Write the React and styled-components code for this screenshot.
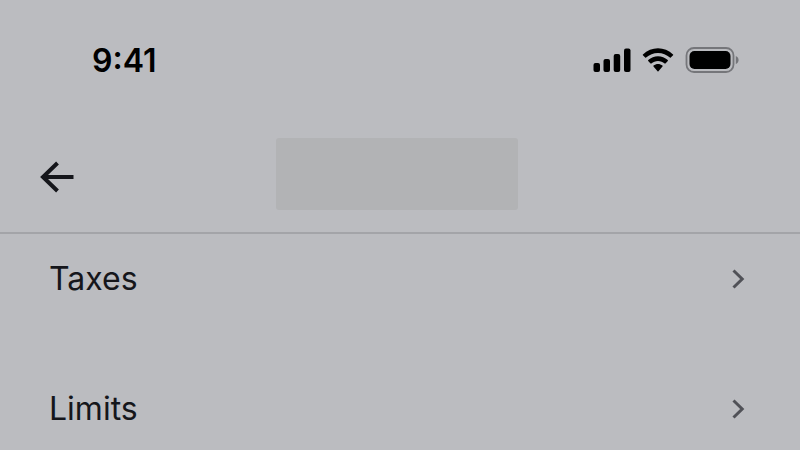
import styled, { createGlobalStyle } from "styled-components";

const items = ["Taxes", "Limits"];

export default function App() {
	return (
		<>
			<GlobalStyle />
			<StatusBar>
				<Clock>9:41</Clock>
				<Indicators>
					<Signal />
					<Wifi />
					<Battery />
				</Indicators>
			</StatusBar>
			<NavBar>
				<BackButton type="button" aria-label="Back">
					<svg width="34" height="32" viewBox="0 0 34 32">
						<path d="M33.500 16H3M17.500 2L3 16l14.500 14" />
					</svg>
				</BackButton>
				<TitlePlaceholder />
			</NavBar>
			<List>
				{items.map((item) => (
					<li key={item}>
						<Row href="#">
							{item}
							<Chevron />
						</Row>
					</li>
				))}
			</List>
		</>
	);
}

function Signal() {
	return (
		<svg width="38" height="24" viewBox="0 0 38 24">
			<rect x="0.500" y="15" width="6.500" height="9" rx="2" />
			<rect x="10.500" y="11" width="6.500" height="13" rx="2" />
			<rect x="20.700" y="6" width="6.500" height="18" rx="2" />
			<rect x="31" y="0.500" width="6.500" height="23.500" rx="2" />
		</svg>
	);
}

function Wifi() {
	return (
		<svg width="32" height="24" viewBox="0 0 32 24">
			<path d="M16 4.9c4.5 0 8.700 1.700 11.900 4.700.25.23.64.23.88 0l2.300-2.300c.26-.26.26-.67 0-.92C22.700-1.700 9.300-1.700.9 6.380c-.26.25-.26.66 0 .92l2.300 2.300c.24.23.63.23.88 0C7.300 6.600 11.500 4.900 16 4.900z" />
			<path d="M16 12.900c2.500 0 4.800.9 6.600 2.500.25.24.64.24.88 0l2.300-2.350c.26-.26.25-.68-.01-.93-5.500-5.160-14.040-5.160-19.540 0-.26.25-.27.67-.01.93l2.300 2.350c.24.24.63.24.88 0 1.800-1.600 4.100-2.500 6.600-2.500z" />
			<path d="M20.500 18.500c.26-.27.25-.7-.03-.94-2.600-2.200-6.340-2.200-8.940 0-.28.24-.29.67-.03.94l4.050 4.800c.25.29.65.29.9 0z" />
		</svg>
	);
}

function Battery() {
	return (
		<svg width="54" height="26" viewBox="0 0 54 26">
			<rect
				x="1.500"
				y="1"
				width="47"
				height="24"
				rx="7.500"
				fill="none"
				stroke="#75767a"
				strokeWidth="1.800"
			/>
			<rect x="4.500" y="4" width="41" height="18" rx="5" />
			<path d="M50.800 8.900v8.200c1.700-.7 2.800-2.200 2.800-4.100s-1.100-3.400-2.800-4.100z" fill="#75767a" />
		</svg>
	);
}

function Chevron() {
	return (
		<ChevronIcon width="14" height="20" viewBox="0 0 14 20">
			<path d="M1.500 1.500L10.200 10l-8.700 8.500" />
		</ChevronIcon>
	);
}

const GlobalStyle = createGlobalStyle`
	body {
		margin: 0;
		background: #bbbcc0;
		color: #15161b;
		font-family: "Inter", "Liberation Sans", sans-serif;
	}
`;

const StatusBar = styled.header`
	display: flex;
	align-items: center;
	justify-content: space-between;
	height: 120px;
	padding: 0 61px 0 92px;
	box-sizing: border-box;
	color: #000;
`;

const Clock = styled.time`
	padding-top: 2px;
	font-size: 32px;
	line-height: 40px;
	font-weight: 600;
`;

const Indicators = styled.div`
	display: flex;
	align-items: center;
	gap: 11px;
`;

const NavBar = styled.nav`
	display: grid;
	grid-template-columns: 1fr 242px 1fr;
	align-items: center;
	height: 114px;
	padding: 0 43px 4px 36px;
	box-sizing: border-box;
	border-bottom: 2px solid #a3a4a8;
`;

const BackButton = styled.button`
	display: flex;
	justify-self: start;
	padding: 10px 4px 4px;
	border: 0;
	background: none;
	cursor: pointer;

	svg {
		fill: none;
		stroke: #15161b;
		stroke-width: 4px;
	}
`;

const TitlePlaceholder = styled.div`
	height: 72px;
	border-radius: 3px;
	background: #b2b3b5;
`;

const List = styled.ul`
	display: flex;
	flex-direction: column;
	gap: 90px;
	margin: 0;
	padding: 25px 54px 0 49px;
	list-style: none;
`;

const Row = styled.a`
	display: flex;
	align-items: center;
	justify-content: space-between;
	font-size: 32px;
	line-height: 40px;
	color: inherit;
	text-decoration: none;
`;

const ChevronIcon = styled.svg`
	fill: none;
	stroke: #505157;
	stroke-width: 3px;
`;
